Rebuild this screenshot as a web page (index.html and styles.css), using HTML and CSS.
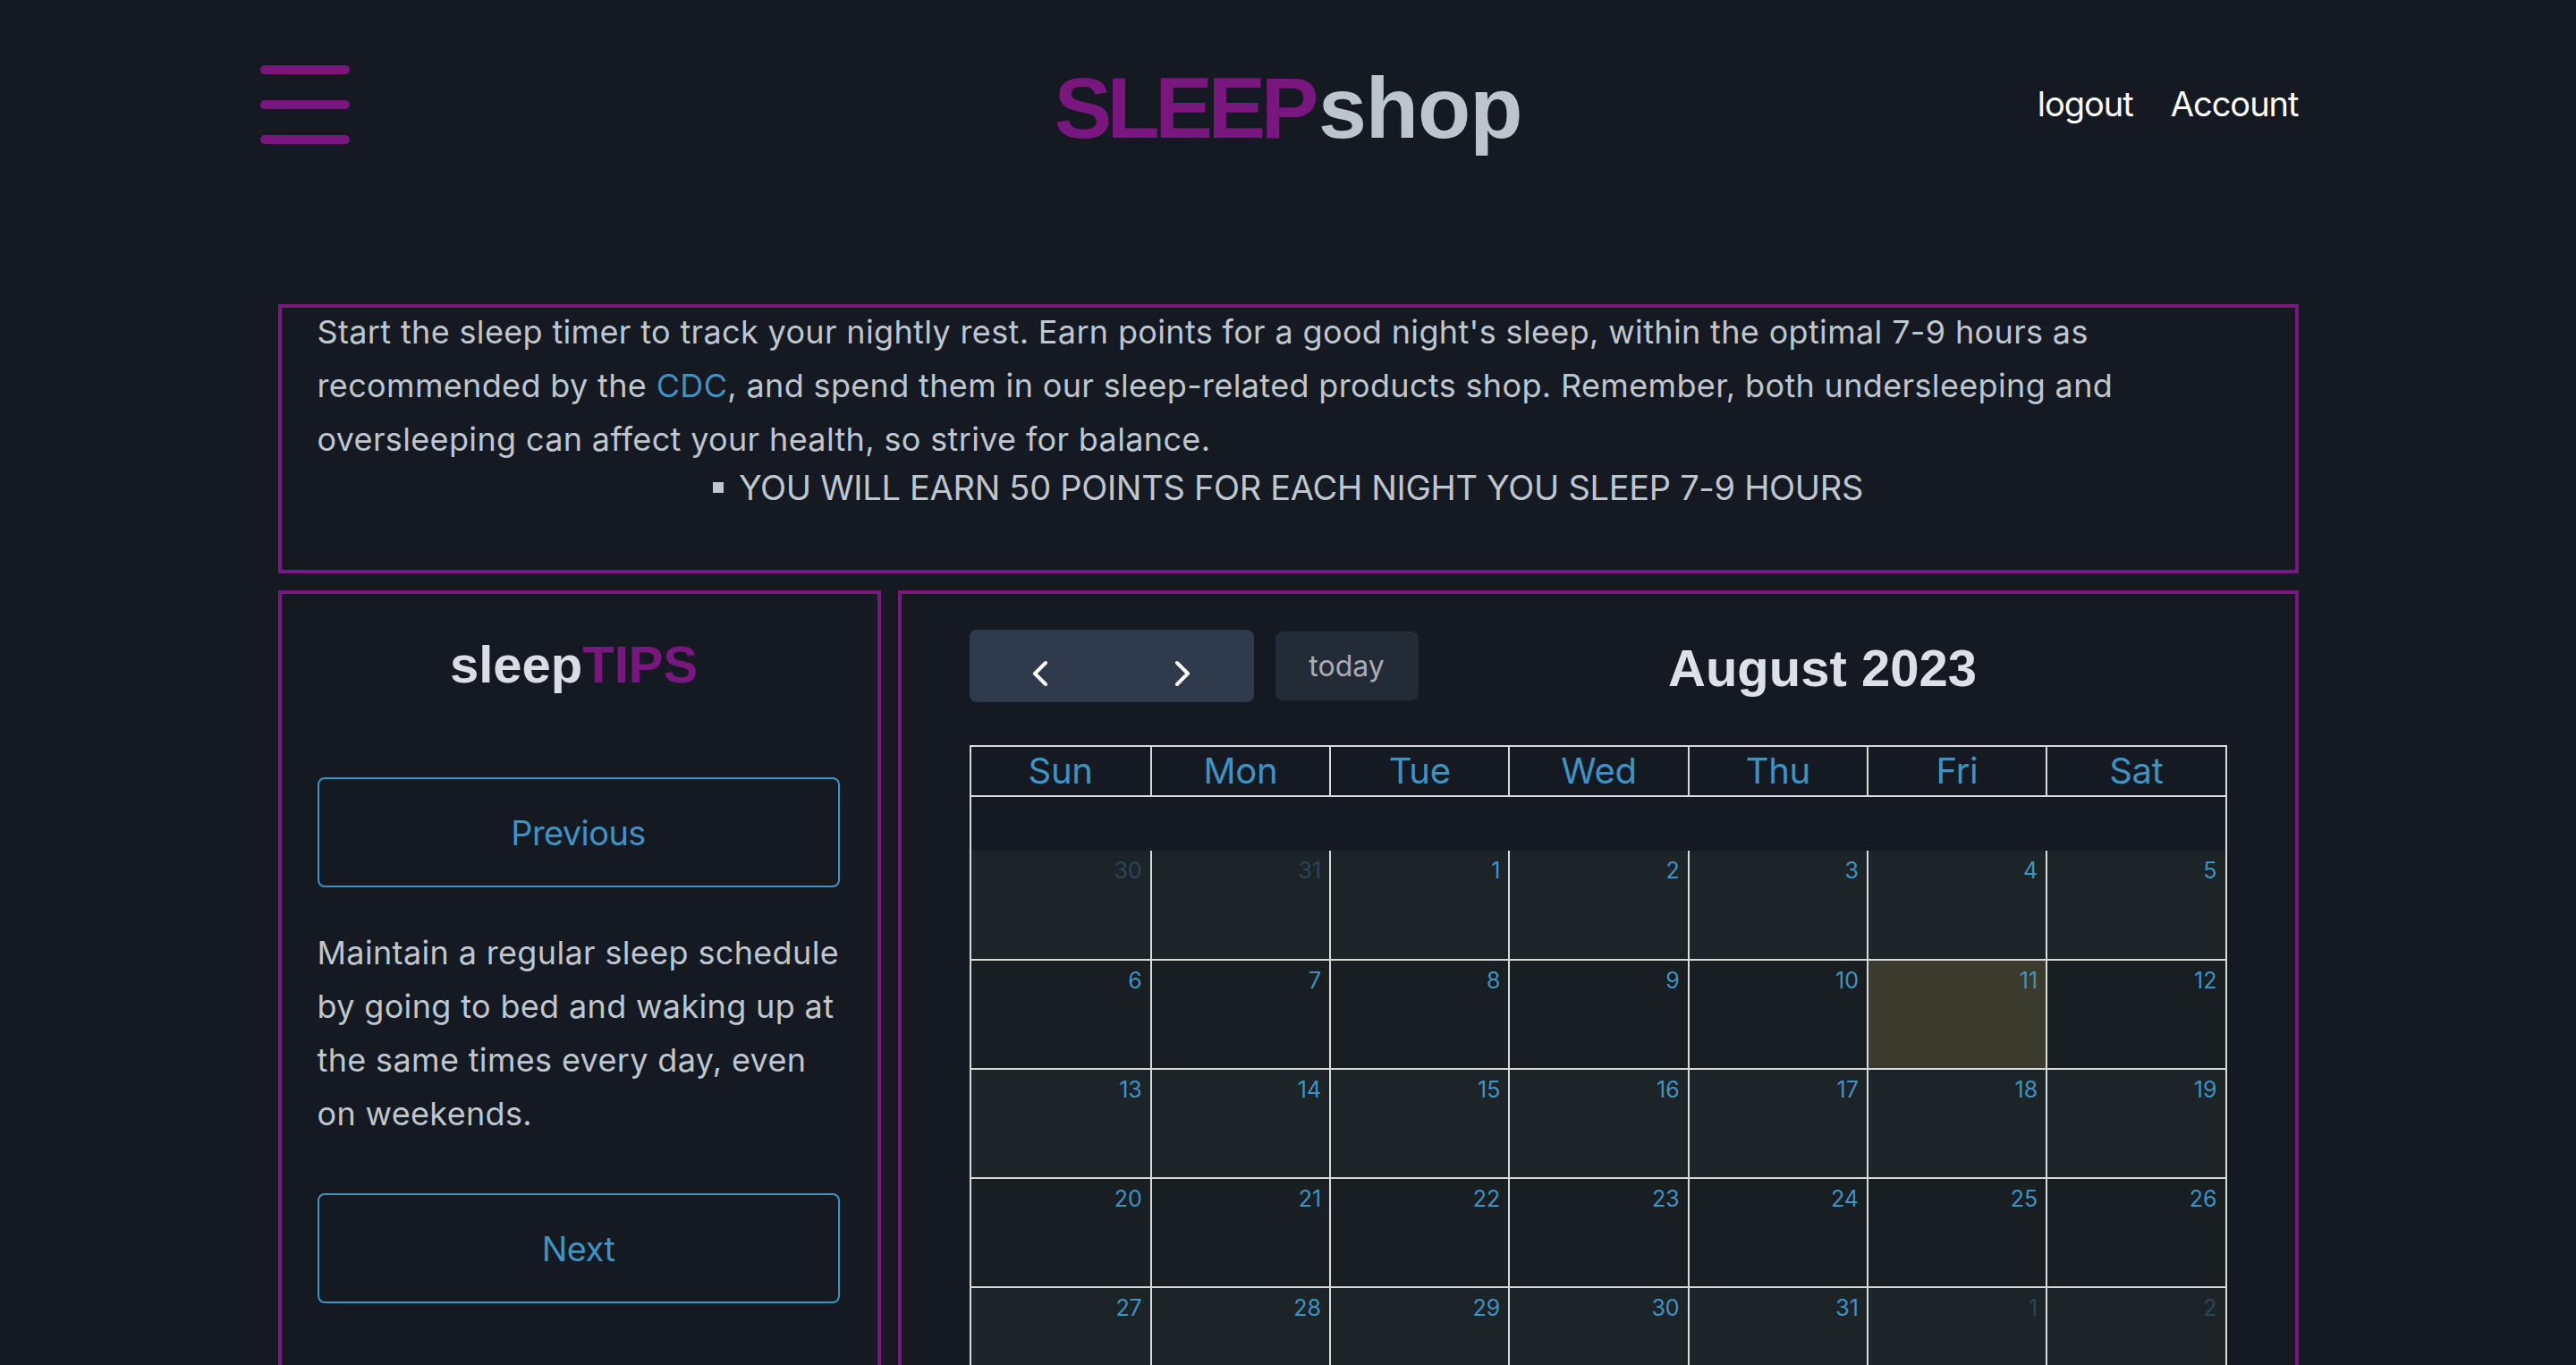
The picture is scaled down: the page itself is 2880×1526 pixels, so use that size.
FILE: index.html
```html
<!DOCTYPE html>
<html lang="en">
<head>
<meta charset="utf-8">
<title>SLEEPshop</title>
<link rel="stylesheet" href="styles.css">
</head>
<body>
<div class="page">
  <header class="topbar">
    <button class="burger" aria-label="menu"><span></span><span></span><span></span></button>
    <h1 class="logo"><span class="logo-a">SLEEP</span><span class="logo-b">shop</span></h1>
    <nav class="nav"><a href="#">logout</a><a href="#">Account</a></nav>
  </header>

  <section class="intro">
    <p>Start the sleep timer to track your nightly rest. Earn points for a good night's sleep, within the optimal 7-9 hours as recommended by the <a href="#">CDC</a>, and spend them in our sleep-related products shop. Remember, both undersleeping and oversleeping can affect your health, so strive for balance.</p>
    <ul><li>YOU WILL EARN 50 POINTS FOR EACH NIGHT YOU SLEEP 7-9 HOURS</li></ul>
  </section>

  <div class="main">
    <aside class="tips">
      <h2 class="tips-title"><span>sleep</span><span class="purple">TIPS</span></h2>
      <button class="tip-btn prev">Previous</button>
      <p class="tip-text">Maintain a regular sleep schedule by going to bed and waking up at the same times every day, even on weekends.</p>
      <button class="tip-btn">Next</button>
    </aside>

    <section class="cal-panel">
      <div class="toolbar">
        <div class="tb-left">
          <div class="btn-group">
            <button class="nav-btn first" aria-label="prev"><svg width="20" height="32" viewBox="0 0 20 32"><polyline points="16,4 4,16 16,28" fill="none" stroke="#fff" stroke-width="4" stroke-linecap="round" stroke-linejoin="round"/></svg></button>
            <button class="nav-btn last" aria-label="next"><svg width="20" height="32" viewBox="0 0 20 32"><polyline points="4,4 16,16 4,28" fill="none" stroke="#fff" stroke-width="4" stroke-linecap="round" stroke-linejoin="round"/></svg></button>
          </div>
          <button class="today-btn">today</button>
        </div>
        <h2 class="cal-title">August 2023</h2>
        <div class="tb-right"></div>
      </div>

      <div class="cal">
        <div class="cal-row cal-head">
          <div class="c">Sun</div><div class="c">Mon</div><div class="c">Tue</div><div class="c">Wed</div><div class="c">Thu</div><div class="c">Fri</div><div class="c">Sat</div>
        </div>
        <div class="cal-band"></div>
        <div class="cal-row week light first-week">
          <div class="c day other">30</div><div class="c day other">31</div><div class="c day">1</div><div class="c day">2</div><div class="c day">3</div><div class="c day">4</div><div class="c day">5</div>
        </div>
        <div class="cal-row week dark">
          <div class="c day">6</div><div class="c day">7</div><div class="c day">8</div><div class="c day">9</div><div class="c day">10</div><div class="c day today">11</div><div class="c day">12</div>
        </div>
        <div class="cal-row week light">
          <div class="c day">13</div><div class="c day">14</div><div class="c day">15</div><div class="c day">16</div><div class="c day">17</div><div class="c day">18</div><div class="c day">19</div>
        </div>
        <div class="cal-row week dark">
          <div class="c day">20</div><div class="c day">21</div><div class="c day">22</div><div class="c day">23</div><div class="c day">24</div><div class="c day">25</div><div class="c day">26</div>
        </div>
        <div class="cal-row week light">
          <div class="c day">27</div><div class="c day">28</div><div class="c day">29</div><div class="c day">30</div><div class="c day">31</div><div class="c day other">1</div><div class="c day other">2</div>
        </div>
        <div class="cal-row week dark">
          <div class="c day other">3</div><div class="c day other">4</div><div class="c day other">5</div><div class="c day other">6</div><div class="c day other">7</div><div class="c day other">8</div><div class="c day other">9</div>
        </div>
      </div>
    </section>
  </div>
</div>
</body>
</html>
```

FILE: styles.css
```css
* { box-sizing: border-box; }

body {
  margin: 0;
  background: #151922;
  color: #bec6ce;
  font-family: Inter, "Noto Sans", sans-serif;
}

.page {
  width: 2259px;
  margin: 0 auto;
}

/* header */
.topbar {
  display: grid;
  grid-template-columns: 1fr auto 1fr;
  align-items: start;
  height: 340px;
}

.burger {
  justify-self: start;
  margin: 73px 0 0 -20px;
  width: 100px;
  padding: 0;
  border: 0;
  background: none;
  display: flex;
  flex-direction: column;
  gap: 29px;
}

.burger span {
  display: block;
  height: 10px;
  border-radius: 5px;
  background: #79177e;
}

.logo {
  margin: 71px 0 0;
  font: 700 97px/100px "Liberation Sans", Arial, sans-serif;
  white-space: nowrap;
}

.logo-a {
  color: #79177e;
  letter-spacing: -5.5px;
  margin-right: 5px;
}

.logo-b {
  color: #bcc5cd;
  letter-spacing: -1px;
}

.nav {
  justify-self: end;
  margin-top: 97px;
  display: flex;
  gap: 42px;
  font-size: 38px;
  line-height: 38px;
  letter-spacing: -1px;
}

.nav a {
  color: #ffffff;
  text-decoration: none;
}

/* intro box */
.intro {
  border: 4px solid #79177e;
  padding: 0 40px 68px;
}

.intro p {
  margin: -3px 0 0;
  font-size: 36px;
  line-height: 60px;
  letter-spacing: 0.35px;
}

.intro a {
  color: #3f93c2;
  text-decoration: none;
}

.intro ul {
  margin: 0;
  padding: 0;
  list-style: none;
  text-align: center;
  font-size: 38px;
  line-height: 48px;
  letter-spacing: -0.3px;
}

.intro li::before {
  content: "";
  display: inline-block;
  width: 12px;
  height: 12px;
  margin-right: 17px;
  background: #bec6ce;
  vertical-align: 8px;
}

/* main */
.main {
  display: grid;
  grid-template-columns: 674px 1fr;
  gap: 19px;
  margin-top: 19px;
}

.tips {
  border: 4px solid #79177e;
  padding: 50px 42px 60px 40px;
  display: flex;
  flex-direction: column;
}

.tips-title {
  margin: 0;
  padding-right: 10px;
  text-align: center;
  font: 700 58px/58px "Liberation Sans", Arial, sans-serif;
  color: #dadde4;
}

.purple { color: #79177e; }

.tip-btn {
  height: 123px;
  border: 2px solid #3d93c3;
  border-radius: 8px;
  background: transparent;
  color: #3d93c3;
  font: 400 38px Inter, sans-serif;
  letter-spacing: -0.6px;
}

.tip-btn.prev { margin-top: 97px; }

.tip-text {
  margin: 43px 0 59px;
  font-size: 36px;
  line-height: 60px;
  letter-spacing: 0.35px;
}

/* calendar */
.cal-panel {
  border: 4px solid #79177e;
  padding: 40px 76px 76px;
}

.toolbar {
  display: flex;
  justify-content: space-between;
  align-items: center;
  height: 81px;
  margin-bottom: 48px;
}

.tb-left {
  display: flex;
  align-items: center;
  gap: 24px;
}

.btn-group { display: flex; }

.nav-btn {
  width: 159px;
  height: 81px;
  padding: 16px 0 0;
  border: 0;
  background: #2f3b4d;
  display: flex;
  align-items: center;
  justify-content: center;
}

.nav-btn.first { border-radius: 8px 0 0 8px; }
.nav-btn.last { border-radius: 0 8px 8px 0; }

.today-btn {
  width: 160px;
  height: 77px;
  padding: 0;
  border: 0;
  border-radius: 8px;
  background: #232b37;
  color: #a9adb3;
  font: 400 32px Inter, sans-serif;
}

.cal-title {
  margin: 0;
  padding-top: 4px;
  font: 700 58px/58px "Liberation Sans", Arial, sans-serif;
  color: #dde0e6;
}

.cal {
  border: 2px solid #d9d9d9;
}

.cal-row {
  display: grid;
  grid-template-columns: repeat(7, 1fr);
}

.c + .c { border-left: 2px solid #d9d9d9; }

.cal-head { border-bottom: 2px solid #d9d9d9; }

.cal-head .c {
  height: 54px;
  line-height: 54px;
  text-align: center;
  color: #3f93c2;
  font-size: 40px;
  letter-spacing: -0.3px;
}

.cal-band { height: 60px; }

.week {
  height: 122px;
  border-top: 2px solid #d9d9d9;
}

.week.first-week {
  height: 121px;
  border-top: 0;
}

.week.light { background: #1d2428; }
.week.dark { background: #181e22; }

.day {
  text-align: right;
  padding: 4px 9px;
  font-size: 25px;
  line-height: 1.5;
  color: #3f93c2;
}

.day.other { color: #28465a; }
.day.today { background: #3a3b2c; }
```
